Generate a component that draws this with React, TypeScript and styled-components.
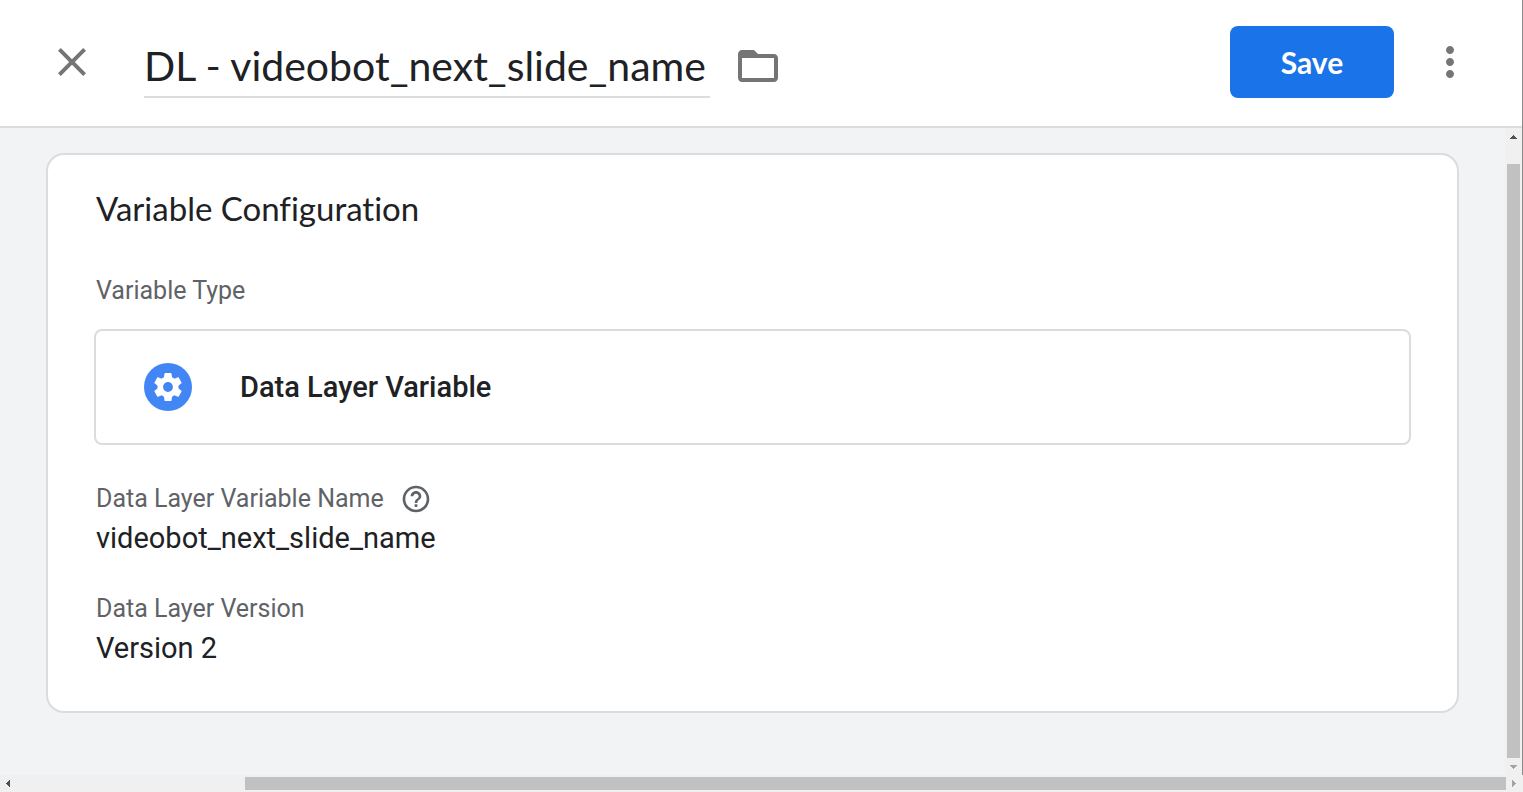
import React from "react";
import styled, { createGlobalStyle } from "styled-components";

const GlobalStyle = createGlobalStyle`
  *, *::before, *::after { box-sizing: border-box; }
  body { margin: 0; font-family: Roboto, "Liberation Sans", sans-serif; color: #202124; background: #f1f3f4; }
`;

const Screen = styled.div`
  display: flex;
  flex-direction: column;
  min-height: 100vh;
`;

const Panel = styled.div`
  flex: 1;
  display: flex;
  flex-direction: column;
  border-right: 1px solid #8a8a8a;
`;

const Header = styled.header`
  display: flex;
  align-items: center;
  padding: 26px 48px 28px;
  background: #fff;
  border-bottom: 2px solid #dadce0;
`;

const IconButton = styled.button`
  display: flex;
  padding: 0;
  border: 0;
  background: none;
  color: #757575;
  cursor: pointer;
`;

const TitleGroup = styled.div`
  flex: 1;
  display: flex;
  align-items: center;
  gap: 24px;
  margin-left: 48px;
  padding-top: 8px;
`;

const TitleInput = styled.input`
  width: 566px;
  height: 64px;
  padding: 0;
  border: 0;
  border-bottom: 2px solid #dadce0;
  outline: 0;
  background: none;
  color: #202124;
  font: 400 41px Lato, Roboto, sans-serif;
`;

const SaveButton = styled.button`
  width: 164px;
  height: 72px;
  margin-right: 32px;
  border: 0;
  border-radius: 8px;
  background: #1a73e8;
  color: #fff;
  font: 700 30px Lato, Roboto, sans-serif;
  cursor: pointer;
`;

const Content = styled.div`
  flex: 1;
  display: flex;
`;

const Main = styled.main`
  flex: 1;
  padding: 25px 46px 60px;
`;

const Card = styled.section`
  padding: 31px 46px 42px;
  border: 2px solid #dadce0;
  border-radius: 18px;
  background: #fff;
`;

const CardTitle = styled.h2`
  margin: 0 0 43px;
  padding-left: 2px;
  font: 400 33px/44px Lato, Roboto, sans-serif;
  font-variant-ligatures: none;
`;

const Label = styled.div`
  display: flex;
  align-items: center;
  gap: 16px;
  padding-left: 2px;
  color: #5f6368;
  font-size: 25px;
  line-height: 36px;
`;

const TypeButton = styled.button`
  display: flex;
  align-items: center;
  gap: 48px;
  width: 100%;
  height: 116px;
  margin: 20px 0 36px;
  padding: 0 48px;
  border: 2px solid #dadce0;
  border-radius: 8px;
  background: #fff;
  color: #202124;
  font: 500 29px/40px Roboto, sans-serif;
  cursor: pointer;
`;

const Fields = styled.dl`
  display: grid;
  gap: 32px;
  margin: 0;
`;

const Field = styled.div``;

const Value = styled.dd`
  margin: 0;
  padding-left: 2px;
  font-size: 29px;
  line-height: 42px;
`;

const HelpButton = styled(IconButton)`
  color: #5f6368;
`;

const Bar = styled.div<{ $vertical?: boolean }>`
  display: flex;
  flex-direction: ${(p) => (p.$vertical ? "column" : "row")};
  flex: none;
  ${(p) => (p.$vertical ? "width: 17px" : "height: 17px")};
  background: #f0f0f0;
`;

const BarArrow = styled.button<{ $muted?: boolean }>`
  display: flex;
  align-items: center;
  justify-content: center;
  width: 17px;
  height: 17px;
  padding: 0;
  border: 0;
  background: none;
  color: ${(p) => (p.$muted ? "#a3a3a3" : "#505050")};
`;

const Track = styled.div<{ $vertical?: boolean }>`
  flex: 1;
  display: flex;
  flex-direction: ${(p) => (p.$vertical ? "column" : "row")};
  padding: ${(p) => (p.$vertical ? "0 2px" : "2px 0")};
`;

const Gap = styled.div<{ $share: number }>`
  flex: ${(p) => p.$share} 0 0;
`;

const Thumb = styled.div<{ $share: number }>`
  flex: ${(p) => p.$share} 0 0;
  background: #c1c1c1;
`;

type IconProps = { d: string; size?: number };
const Icon = ({ d, size = 48 }: IconProps) => (
  <svg width={size} height={size} viewBox="0 0 24 24" fill="currentColor" aria-hidden="true">
    <path d={d} />
  </svg>
);

const paths = {
  close: "M19 6.41 17.59 5 12 10.59 6.41 5 5 6.41 10.59 12 5 17.59 6.41 19 12 13.41 17.59 19 19 17.59 13.41 12z",
  folder:
    "M20 6h-8l-2-2H4c-1.1 0-1.99.9-1.99 2L2 18c0 1.1.9 2 2 2h16c1.1 0 2-.9 2-2V8c0-1.1-.9-2-2-2zm0 12H4V8h16v10z",
  more: "M12 8c1.1 0 2-.9 2-2s-.9-2-2-2-2 .9-2 2 .9 2 2 2zm0 2c-1.1 0-2 .9-2 2s.9 2 2 2 2-.9 2-2-.9-2-2-2zm0 6c-1.1 0-2 .9-2 2s.9 2 2 2 2-.9 2-2-.9-2-2-2z",
  help: "M11 18h2v-2h-2v2zm1-16C6.48 2 2 6.48 2 12s4.48 10 10 10 10-4.48 10-10S17.52 2 12 2zm0 18c-4.41 0-8-3.59-8-8s3.59-8 8-8 8 3.59 8 8-3.59 8-8 8zm0-14c-2.21 0-4 1.79-4 4h2c0-1.1.9-2 2-2s2 .9 2 2c0 2-3 1.75-3 5h2c0-2.25 3-2.5 3-5 0-2.21-1.79-4-4-4z",
};

const GearBadge = () => (
  <svg width="48" height="48" viewBox="0 0 48 48" aria-hidden="true">
    <circle cx="24" cy="24" r="24" fill="#4285f4" />
    <path
      fill="#fff"
      transform="translate(7.2 7.2) scale(1.4)"
      d="M19.43 12.98c.04-.32.07-.64.07-.98s-.03-.66-.07-.98l2.11-1.65c.19-.15.24-.42.12-.64l-2-3.46c-.12-.22-.39-.3-.61-.22l-2.49 1c-.52-.4-1.08-.73-1.69-.98l-.38-2.65C14.46 2.18 14.25 2 14 2h-4c-.25 0-.46.18-.49.42l-.38 2.65c-.61.25-1.17.59-1.69.98l-2.49-1c-.23-.09-.49 0-.61.22l-2 3.46c-.13.22-.07.49.12.64l2.11 1.65c-.04.32-.07.65-.07.98s.03.66.07.98l-2.11 1.65c-.19.15-.24.42-.12.64l2 3.46c.12.22.39.3.61.22l2.49-1c.52.4 1.08.73 1.69.98l.38 2.65c.03.24.24.42.49.42h4c.25 0 .46-.18.49-.42l.38-2.65c.61-.25 1.17-.59 1.69-.98l2.49 1c.23.09.49 0 .61-.22l2-3.46c.12-.22.07-.49-.12-.64l-2.11-1.65zM12 15.5c-1.93 0-3.5-1.57-3.5-3.5s1.57-3.5 3.5-3.5 3.5 1.57 3.5 3.5-1.57 3.5-3.5 3.5z"
    />
  </svg>
);

const Arrow = ({ points }: { points: string }) => (
  <svg width="9" height="9" viewBox="0 0 9 9" fill="currentColor" shapeRendering="crispEdges" aria-hidden="true">
    <polygon points={points} />
  </svg>
);

export default function App() {
  return (
    <>
      <GlobalStyle />
      <Screen>
        <Panel>
          <Header>
            <IconButton aria-label="Close">
              <Icon d={paths.close} />
            </IconButton>
            <TitleGroup>
              <TitleInput aria-label="Variable title" defaultValue="DL - videobot_next_slide_name" spellCheck={false} />
              <IconButton aria-label="Move to folder">
                <Icon d={paths.folder} />
              </IconButton>
            </TitleGroup>
            <SaveButton>Save</SaveButton>
            <IconButton aria-label="More actions">
              <Icon d={paths.more} />
            </IconButton>
          </Header>
          <Content>
            <Main>
              <Card>
                <CardTitle>Variable Configuration</CardTitle>
                <Label id="variable-type">Variable Type</Label>
                <TypeButton aria-describedby="variable-type">
                  <GearBadge />
                  Data Layer Variable
                </TypeButton>
                <Fields>
                  <Field>
                    <Label as="dt">
                      Data Layer Variable Name
                      <HelpButton aria-label="Help">
                        <Icon d={paths.help} size={32} />
                      </HelpButton>
                    </Label>
                    <Value>videobot_next_slide_name</Value>
                  </Field>
                  <Field>
                    <Label as="dt">Data Layer Version</Label>
                    <Value>Version 2</Value>
                  </Field>
                </Fields>
              </Card>
            </Main>
            <Bar $vertical>
              <BarArrow aria-label="Scroll up">
                <Arrow points="1,7 8,7 5,3 4,3" />
              </BarArrow>
              <Track $vertical>
                <Gap $share={19} />
                <Thumb $share={594} />
              </Track>
              <BarArrow $muted aria-label="Scroll down">
                <Arrow points="1,3 8,3 5,7 4,7" />
              </BarArrow>
            </Bar>
          </Content>
        </Panel>
        <Bar>
          <BarArrow aria-label="Scroll left">
            <Arrow points="6,1 6,8 2,5 2,4" />
          </BarArrow>
          <Track>
            <Gap $share={228} />
            <Thumb $share={1261} />
          </Track>
          <BarArrow $muted aria-label="Scroll right">
            <Arrow points="2,1 2,8 6,5 6,4" />
          </BarArrow>
        </Bar>
      </Screen>
    </>
  );
}
